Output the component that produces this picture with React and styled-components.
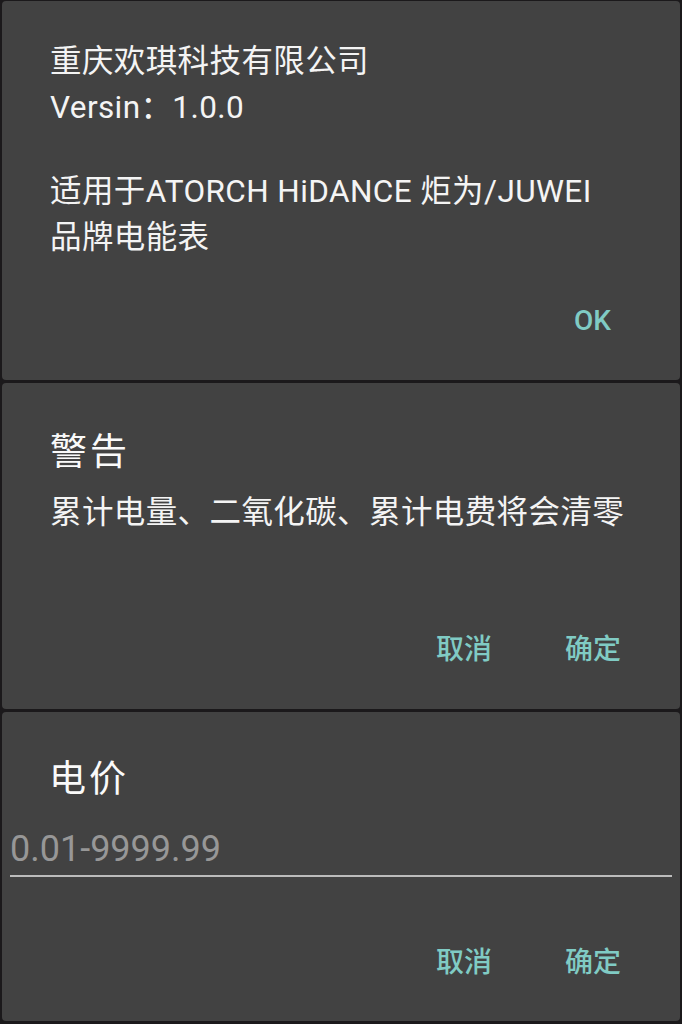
import React from "react";
import styled, { createGlobalStyle } from "styled-components";

const Global = createGlobalStyle`
  html, body {
    margin: 0;
    padding: 0;
    background: #1b191b;
  }
  body {
    font-family: Roboto, "Noto Sans CJK SC", sans-serif;
    -webkit-font-smoothing: antialiased;
  }
`;

const Stack = styled.div`
  display: flex;
  flex-direction: column;
  gap: 3px;
  padding: 1px 2px 0 2px;
  width: 682px;
  box-sizing: border-box;
`;

const Dialog = styled.section`
  background: #424242;
  border-radius: 4px;
  height: ${(p) => p.$h}px;
  box-sizing: border-box;
  display: flex;
  flex-direction: column;
  padding: ${(p) => p.$pad};
  color: #f4f4f4;
`;

const Message = styled.p`
  margin: 0;
  font-size: 31.5px;
  letter-spacing: 0.4px;
  line-height: 46px;
  color: #f4f4f4;
`;

const Gap = styled.div`
  height: ${(p) => p.$h}px;
  flex: none;
`;

const Title = styled.h2`
  margin: 0 0 0 ${(p) => p.$indent || 0}px;
  font-weight: 400;
  font-size: 37px;
  letter-spacing: 3px;
  line-height: 48px;
  color: #fafafa;
`;

const Actions = styled.div`
  margin-top: auto;
  display: flex;
  justify-content: flex-end;
  gap: 73px;
  padding-right: ${(p) => p.$right || 59}px;
`;

const ActionButton = styled.button`
  background: none;
  border: 0;
  padding: 0;
  font-family: Roboto, "Noto Sans CJK SC", sans-serif;
  font-size: 28px;
  font-weight: 500;
  line-height: 40px;
  color: #80cbc4;
  letter-spacing: 0;
`;

const Field = styled.input`
  display: block;
  margin: 0 8px;
  width: calc(100% - 16px);
  box-sizing: border-box;
  background: transparent;
  border: 0;
  border-bottom: 2px solid #bcbcbc;
  padding: 0 0 2px 0;
  font-family: Roboto, "Noto Sans CJK SC", sans-serif;
  font-size: 36px;
  line-height: 48px;
  color: #f4f4f4;
  outline: none;
  &::placeholder {
    color: #979797;
  }
`;

export default function App() {
  return (
    <>
      <Global />
      <Stack>
        <Dialog $h={379} $pad="38px 0 39px 48px">
          <Message>重庆欢琪科技有限公司</Message>
          <Message>Versin：1.0.0</Message>
          <Gap $h={38} />
          <Message>适用于ATORCH HiDANCE 炬为/JUWEI</Message>
          <Message>品牌电能表</Message>
          <Actions $right={69}>
            <ActionButton>OK</ActionButton>
          </Actions>
        </Dialog>

        <Dialog $h={326} $pad="46px 0 39px 48px">
          <Title>警告</Title>
          <Gap $h={13} />
          <Message>累计电量、二氧化碳、累计电费将会清零</Message>
          <Actions>
            <ActionButton>取消</ActionButton>
            <ActionButton>确定</ActionButton>
          </Actions>
        </Dialog>

        <Dialog $h={309} $pad="44px 0 38px 0">
          <Title $indent={47}>电价</Title>
          <Gap $h={21} />
          <Field placeholder="0.01-9999.99" />
          <Actions>
            <ActionButton>取消</ActionButton>
            <ActionButton>确定</ActionButton>
          </Actions>
        </Dialog>
      </Stack>
    </>
  );
}
